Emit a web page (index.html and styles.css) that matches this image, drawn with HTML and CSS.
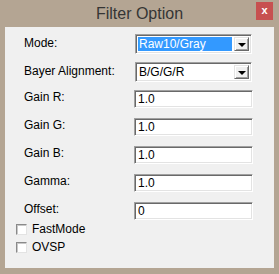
FILE: index.html
```html
<!DOCTYPE html>
<html lang="en">
<head>
    <meta charset="UTF-8">
    <title>Filter Option</title>
    <link rel="stylesheet" href="styles.css">
</head>
<body>
    <div class="window">
        <div class="titlebar">
            <span class="title">Filter Option</span>
            <span class="close">x</span>
        </div>
        <div class="client">
            <div class="row">
                <span class="label combo-label">Mode:</span>
                <div class="combo">
                    <span class="combo-text selected">Raw10/Gray</span>
                    <span class="drop"><span class="arrow"></span></span>
                </div>
            </div>
            <div class="row">
                <span class="label combo-label">Bayer Alignment:</span>
                <div class="combo">
                    <span class="combo-text">B/G/G/R</span>
                    <span class="drop"><span class="arrow"></span></span>
                </div>
            </div>
            <div class="row">
                <span class="label">Gain R:</span>
                <div class="field">1.0</div>
            </div>
            <div class="row">
                <span class="label">Gain G:</span>
                <div class="field">1.0</div>
            </div>
            <div class="row">
                <span class="label">Gain B:</span>
                <div class="field">1.0</div>
            </div>
            <div class="row">
                <span class="label">Gamma:</span>
                <div class="field">1.0</div>
            </div>
            <div class="row last">
                <span class="label">Offset:</span>
                <div class="field">0</div>
            </div>
            <div class="check-row">
                <span class="checkbox"></span>
                <span class="check-label">FastMode</span>
            </div>
            <div class="check-row">
                <span class="checkbox"></span>
                <span class="check-label">OVSP</span>
            </div>
        </div>
    </div>
</body>
</html>
```

FILE: styles.css
```css
html, body {
    margin: 0;
    padding: 0;
    background: #b4a593;
}
.window {
    width: 279px;
    height: 274px;
    background: #b4a593;
    display: flex;
    flex-direction: column;
    font-family: "Liberation Sans", Arial, sans-serif;
}
.titlebar {
    position: relative;
    height: 27px;
    text-align: center;
}
.title {
    font-size: 16px;
    line-height: 27px;
    color: #353535;
}
.close {
    position: absolute;
    left: 256px;
    top: 2px;
    width: 17px;
    height: 18px;
    background: #c75050;
    color: #fff;
    font-size: 11px;
    font-weight: bold;
    line-height: 17px;
    text-align: center;
}
.client {
    flex: 1;
    margin: 0 5px 6px 5px;
    background: #f0f0f0;
    padding-top: 7px;
    font-size: 12px;
    color: #000;
}
.row {
    display: flex;
    height: 28px;
    padding-left: 19px;
}
.row.last {
    height: 18px;
}
.label {
    width: 110px;
    line-height: 14px;
}
.combo-label {
    padding-top: 2px;
}
.field {
    box-sizing: border-box;
    width: 119px;
    height: 18px;
    background: #fff;
    border: 1px solid;
    border-color: #a0a0a0 #fff #fff #a0a0a0;
    box-shadow: inset 1px 1px #696969, inset -1px -1px #e3e3e3;
    padding-left: 3px;
    line-height: 16px;
}
.combo {
    box-sizing: border-box;
    display: flex;
    align-items: stretch;
    width: 117px;
    height: 20px;
    margin-left: 1px;
    background: #fff;
    border: 1px solid;
    border-color: #a0a0a0 #fff #fff #a0a0a0;
    box-shadow: inset 1px 1px #696969, inset -1px -1px #e3e3e3;
    padding: 2px 2px 2px 2px;
}
.combo-text {
    flex: 1;
    line-height: 14px;
    padding-left: 1px;
}
.combo-text.selected {
    background: #3399ff;
    color: #fff;
    margin-right: 2px;
}
.drop {
    box-sizing: border-box;
    width: 15px;
    background: #f0f0f0;
    border: 1px solid;
    border-color: #e3e3e3 #696969 #696969 #e3e3e3;
    box-shadow: inset 1px 1px #fff, inset -1px -1px #a0a0a0;
    display: flex;
    align-items: center;
    justify-content: center;
}
.arrow {
    width: 0;
    height: 0;
    border-left: 4px solid transparent;
    border-right: 4px solid transparent;
    border-top: 4px solid #000;
    margin-top: 1px;
}
.check-row {
    display: flex;
    align-items: center;
    height: 18px;
    padding-left: 11px;
}
.checkbox {
    box-sizing: border-box;
    width: 11px;
    height: 11px;
    background: #fff;
    border: 1px solid;
    border-color: #8a8a8a #e3e3e3 #e3e3e3 #8a8a8a;
    box-shadow: inset 1px 1px #c8c8c8;
}
.check-label {
    margin-left: 5px;
    line-height: 14px;
}
```
